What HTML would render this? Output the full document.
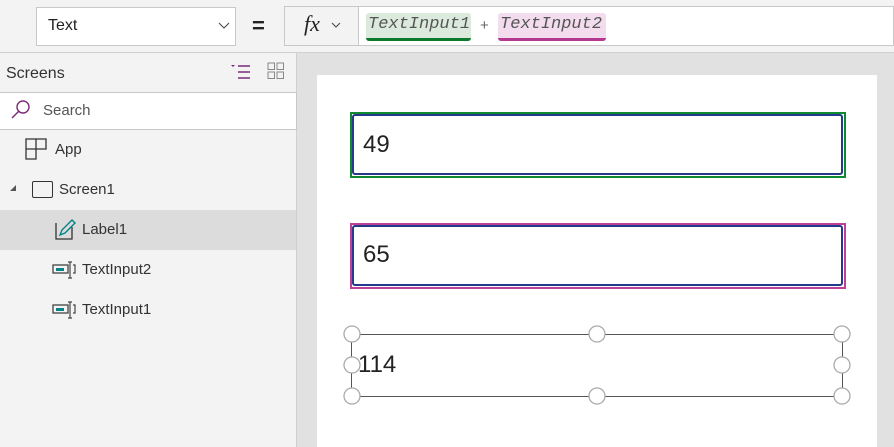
<!DOCTYPE html>
<html><head><style>
body{margin:0;width:894px;height:447px;overflow:hidden;font-family:"Liberation Sans",sans-serif;background:#e1e1e1;position:relative}
.a{position:absolute;box-sizing:border-box}
</style></head><body>
<div class="a" style="left:0;top:0;width:894px;height:53px;background:#f3f3f3;border-bottom:1px solid #d0d0d0"></div>
<div class="a" style="left:36px;top:7px;width:200px;height:39px;background:#fff;border:1px solid #c8c8c8"></div>
<div class="a" style="left:48px;top:17px;font-size:16px;color:#222">Text</div>
<svg class="a" style="left:218px;top:22px" width="12" height="8"><path d="M1 1L6 6L11 1" stroke="#444" fill="none"/></svg>
<div class="a" style="left:252px;top:13px;font-size:22px;font-weight:bold;color:#222">=</div>
<div class="a" style="left:284px;top:6px;width:610px;height:40px;background:#fff;border:1px solid #c8c8c8"></div>
<div class="a" style="left:284px;top:6px;width:75px;height:40px;background:#f3f3f3;border:1px solid #c8c8c8"></div>
<div class="a" style="left:304px;top:11px;font-family:'Liberation Serif',serif;font-style:italic;font-size:22px;color:#222">fx</div>
<svg class="a" style="left:331px;top:22px" width="10" height="7"><path d="M1 1L5 5L9 1" stroke="#444" fill="none"/></svg>
<div class="a" style="left:366px;top:13px;height:28px;width:105px;background:#dbeadd;border-bottom:3px solid #0b7a2a;border-radius:3px"></div>
<div class="a" style="left:368px;top:15px;font-family:'Liberation Mono',monospace;font-style:italic;font-size:17px;color:#555">TextInput1</div>
<div class="a" style="left:480px;top:17px;font-size:15px;color:#666">+</div>
<div class="a" style="left:498px;top:13px;height:28px;width:108px;background:#f2dced;border-bottom:3px solid #b4388f;border-radius:3px"></div>
<div class="a" style="left:500px;top:15px;font-family:'Liberation Mono',monospace;font-style:italic;font-size:17px;color:#555">TextInput2</div>

<div class="a" style="left:0;top:53px;width:297px;height:394px;background:#f3f3f3;border-right:1px solid #d0d0d0"></div>
<div class="a" style="left:6px;top:65px;font-size:16px;color:#333">Screens</div>
<svg class="a" style="left:230px;top:63px" width="22" height="18"><path d="M1 2h4l-2 2z" fill="#7a2a78"/><path d="M8 3h12M8 9h12M8 15h12" stroke="#7a2a78" stroke-width="1.4"/></svg>
<svg class="a" style="left:267px;top:62px" width="18" height="18"><rect x="1" y="1" width="6.5" height="6.5" fill="none" stroke="#888"/><rect x="10" y="1" width="6.5" height="6.5" fill="none" stroke="#888"/><rect x="1" y="10" width="6.5" height="6.5" fill="none" stroke="#888"/><rect x="10" y="10" width="6.5" height="6.5" fill="none" stroke="#888"/></svg>
<div class="a" style="left:0;top:92px;width:297px;height:38px;background:#fff;border:1px solid #c8c8c8;border-left:none"></div>
<svg class="a" style="left:10px;top:99px" width="22" height="22"><circle cx="13" cy="8" r="6" fill="none" stroke="#7a2a78" stroke-width="1.4"/><path d="M9 12L2 19" stroke="#7a2a78" stroke-width="1.4"/></svg>
<div class="a" style="left:43px;top:102px;font-size:15px;color:#555">Search</div>
<svg class="a" style="left:25px;top:138px" width="22" height="22"><path d="M1 1h20v10H11v10H1z M11 1v10 M1 11h10" fill="none" stroke="#333" stroke-width="1.3"/></svg>
<div class="a" style="left:55px;top:141px;font-size:15px;color:#333">App</div>
<svg class="a" style="left:8px;top:183px" width="10" height="10"><path d="M8 2v6H2z" fill="#555"/></svg>
<div class="a" style="left:32px;top:181px;width:21px;height:17px;border:1.3px solid #333;border-radius:2px"></div>
<div class="a" style="left:59px;top:181px;font-size:15px;color:#333">Screen1</div>
<div class="a" style="left:0;top:210px;width:296px;height:40px;background:#dcdcdc"></div>
<svg class="a" style="left:55px;top:219px" width="21" height="21"><path d="M1 4v16h16V8" fill="none" stroke="#333" stroke-width="1.3"/><path d="M5 16l2-5 10-10 3 3-10 10z" fill="none" stroke="#038387" stroke-width="1.4"/></svg>
<div class="a" style="left:82px;top:221px;font-size:15px;color:#333">Label1</div>
<svg class="a" style="left:52px;top:261px" width="24" height="18"><rect x="1" y="4" width="15" height="8" fill="none" stroke="#444" stroke-width="1.3"/><rect x="4" y="7" width="8" height="3" fill="#038387"/><path d="M16 1h4M18 1v16M16 17h4M21 4h2v8h-2" stroke="#444" fill="none" stroke-width="1.2"/></svg>
<div class="a" style="left:82px;top:261px;font-size:15px;color:#333">TextInput2</div>
<svg class="a" style="left:52px;top:301px" width="24" height="18"><rect x="1" y="4" width="15" height="8" fill="none" stroke="#444" stroke-width="1.3"/><rect x="4" y="7" width="8" height="3" fill="#038387"/><path d="M16 1h4M18 1v16M16 17h4M21 4h2v8h-2" stroke="#444" fill="none" stroke-width="1.2"/></svg>
<div class="a" style="left:82px;top:301px;font-size:15px;color:#333">TextInput1</div>

<div class="a" style="left:317px;top:75px;width:560px;height:372px;background:#fff"></div>
<div class="a" style="left:350px;top:112px;width:496px;height:66px;border:2px solid #108a2e"></div>
<div class="a" style="left:352px;top:114px;width:491px;height:61px;border:2px solid #243a8a;border-radius:3px"></div>
<div class="a" style="left:363px;top:131px;font-size:24px;color:#222">49</div>
<div class="a" style="left:350px;top:223px;width:496px;height:66px;border:2px solid #c03f98"></div>
<div class="a" style="left:352px;top:225px;width:491px;height:61px;border:2px solid #243a8a;border-radius:3px"></div>
<div class="a" style="left:363px;top:241px;font-size:24px;color:#222">65</div>
<div class="a" style="left:351px;top:334px;width:492px;height:63px;border:1px solid #555"></div>
<div class="a" style="left:358px;top:351px;font-size:24px;color:#222">114</div>
<svg class="a" style="left:340px;top:323px" width="514" height="84">
<g fill="#fff" stroke="#aaa" stroke-width="1.3">
<circle cx="12" cy="11" r="8"/><circle cx="257" cy="11" r="8"/><circle cx="502" cy="11" r="8"/>
<circle cx="12" cy="42" r="8"/><circle cx="502" cy="42" r="8"/>
<circle cx="12" cy="73" r="8"/><circle cx="257" cy="73" r="8"/><circle cx="502" cy="73" r="8"/>
</g></svg>
</body></html>
